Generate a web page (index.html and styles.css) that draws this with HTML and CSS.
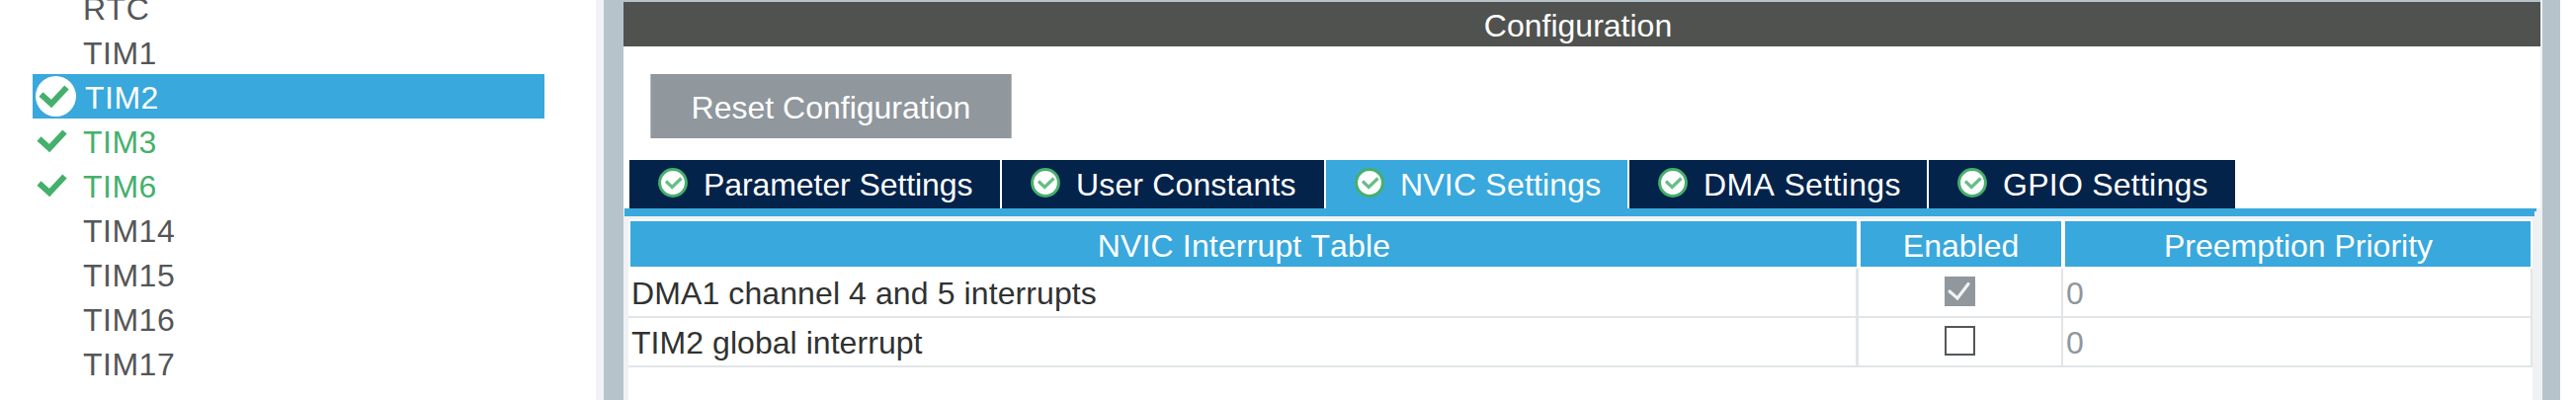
FILE: index.html
```html
<!DOCTYPE html>
<html lang="en">
<head>
<meta charset="utf-8">
<title>TIM2 Configuration</title>
<link rel="stylesheet" href="styles.css">
</head>
<body>
<svg class="defs" width="0" height="0" aria-hidden="true">
  <symbol id="tick" viewBox="0 0 34 28">
    <path d="M4.5 11.5 L15 21 L30.5 4.5" fill="none" stroke="#45b06c" stroke-width="6"/>
  </symbol>
  <symbol id="badge" viewBox="0 0 30 30">
    <circle cx="15" cy="15" r="13.4" fill="#fff" stroke="#45b06c" stroke-width="3"/>
    <path d="M8 13.5 L14.2 19.5 L23.5 10.5" fill="none" stroke="#66be86" stroke-width="3.2"/>
  </symbol>
</svg>
<div class="app">
  <nav class="sidebar">
    <ul class="list">
      <li class="item"><span class="mark"></span><span>RTC</span></li>
      <li class="item"><span class="mark"></span><span>TIM1</span></li>
      <li class="item selected"><span class="mark"><svg width="34" height="28"><use href="#tick"/></svg></span><span>TIM2</span></li>
      <li class="item on"><span class="mark"><svg width="34" height="28"><use href="#tick"/></svg></span><span>TIM3</span></li>
      <li class="item on"><span class="mark"><svg width="34" height="28"><use href="#tick"/></svg></span><span>TIM6</span></li>
      <li class="item"><span class="mark"></span><span>TIM14</span></li>
      <li class="item"><span class="mark"></span><span>TIM15</span></li>
      <li class="item"><span class="mark"></span><span>TIM16</span></li>
      <li class="item"><span class="mark"></span><span>TIM17</span></li>
    </ul>
  </nav>
  <div class="scroll"></div>
  <div class="divider"></div>
  <main class="panel">
    <h1 class="title">Configuration</h1>
    <div class="toolbar"><button class="reset">Reset Configuration</button></div>
    <div class="tabs">
      <div class="tab t1"><svg width="30" height="30"><use href="#badge"/></svg><span>Parameter Settings</span></div>
      <div class="tab t2"><svg width="30" height="30"><use href="#badge"/></svg><span>User Constants</span></div>
      <div class="tab t3 active"><svg width="30" height="30"><use href="#badge"/></svg><span>NVIC Settings</span></div>
      <div class="tab t4"><svg width="30" height="30"><use href="#badge"/></svg><span>DMA Settings</span></div>
      <div class="tab t5"><svg width="30" height="30"><use href="#badge"/></svg><span>GPIO Settings</span></div>
    </div>
    <div class="content">
      <div class="rule-top"></div>
      <div class="rule"></div>
      <div class="table">
        <div class="head">
          <div class="th h1"><span>NVIC Interrupt Table</span></div>
          <div class="th"><span>Enabled</span></div>
          <div class="th h3"><span>Preemption Priority</span></div>
        </div>
        <div class="row">
          <div class="td name n1"><span>DMA1 channel 4 and 5 interrupts</span></div>
          <div class="td flag"><span class="box checked"><svg width="30" height="30" viewBox="0 0 30 30"><path d="M5 15 L13 22 L24 7.5" fill="none" stroke="#f1f3f4" stroke-width="3.2" stroke-linecap="round"/></svg></span></div>
          <div class="td value">0</div>
        </div>
        <div class="row">
          <div class="td name n2"><span>TIM2 global interrupt</span></div>
          <div class="td flag"><span class="box"></span></div>
          <div class="td value">0</div>
        </div>
      </div>
    </div>
  </main>
  <div class="edge"></div>
</div>
</body>
</html>
```
FILE: styles.css
```css
* { box-sizing: border-box; }
body { margin: 0; background: #fff; overflow: hidden; font: 32px "Liberation Sans", Arial, sans-serif; font-kerning: none; }
.defs { display: block; }
.app { display: flex; width: 2607px; height: 405px; overflow: hidden; white-space: nowrap; }
.sidebar { width: 603px; height: 405px; padding-left: 33px; overflow: hidden; }
.list { list-style: none; margin: -15px 0 0; padding: 0; width: 518px; }
.item { display: flex; height: 45px; line-height: 45px; color: #555657; letter-spacing: .5px; }
.item > span:last-child { padding-top: 2px; }
.mark { width: 51px; height: 45px; padding: 9px 0 0 2px; line-height: 0; }
.item.on { color: #45b06c; }
.item.selected { background: #39a8dc; color: #fff; }
.selected .mark { width: 41px; height: 41px; margin: 2px 9px 0 3px; padding: 7px 0 0 1px; border-radius: 50%; background: #fff; }
.scroll { width: 8px; background: #f0f2f5; }
.divider { width: 20px; background: #b7c3ca; }
.panel { width: 1942px; border-right: 2px solid #f0f1f3; }
.title { margin: 0; height: 47px; border-top: 2px solid #b7c3ca; padding: 2px 8px 0 0; background: #50524f; color: #fff; font-size: 32px; font-weight: 400; line-height: 45px; text-align: center; }
.toolbar { height: 115px; padding: 28px 0 0 27px; }
.reset { display: block; width: 366px; height: 65px; margin: 0; padding: 3px 0 0; border: 0; border-left: 1px solid #b5babd; border-right: 1px solid #b5babd; background: #90979d; color: #fff; font: inherit; text-align: center; }
.tabs { display: flex; gap: 2px; height: 49px; padding-left: 6px; }
.tab { display: flex; height: 49px; padding-left: 29px; background: #04234a; color: #fff; line-height: 50px; }
.tab svg { margin: 8px 16px 0 0; flex: none; }
.t1 { width: 375px; letter-spacing: -.08px; }
.t2 { width: 326px; letter-spacing: .15px; }
.t3 { width: 305px; letter-spacing: .2px; }
.t4 { width: 301px; letter-spacing: .35px; }
.t5 { width: 310px; letter-spacing: .25px; }
.tab.active { background: #39a8dc; }
.content { width: 1940px; height: 194px; background: #f0f1f3; }
.rule-top { width: 1935px; height: 3px; margin-left: 1px; background: #39a8dc; }
.rule { width: 1933px; height: 5px; margin: 0 0 3px 1px; background: #39a8dc; }
.table { width: 1927px; height: 183px; margin-left: 5px; padding-top: 2px; background: #fff; }
.head { display: grid; grid-template-columns: 1241px 203px 471px; gap: 4px; padding-left: 2px; height: 48px; }
.th { height: 46px; padding-top: 2px; line-height: 46px; background: #39a8dc; color: #fff; text-align: center; }
.th.h1 { padding-left: 1px; letter-spacing: .15px; }
.th.h3 { padding-left: 1px; }
.row { display: grid; grid-template-columns: 1245px 207px 475px; height: 50px; border-bottom: 2px solid #e1e5e8; }
.td { height: 50px; line-height: 50px; border-right: 2px solid #e1e5e8; color: #303231; }
.name { padding-left: 3px; border-right-width: 3px; }
.n1 { letter-spacing: .1px; }
.n2 { letter-spacing: .05px; }
.td.value { padding-left: 3px; color: #90979d; }
.flag { display: flex; padding: 8px 0 0 87px; }
.box { width: 31px; height: 30px; border: 2px solid #555657; line-height: 0; }
.box.checked { border: 0; background: #90979d; }
.edge { width: 18px; background: #b7c3ca; }
```
